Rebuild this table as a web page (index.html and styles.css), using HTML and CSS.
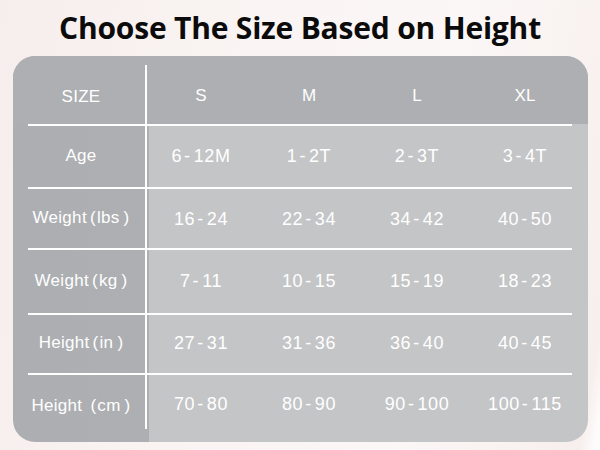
FILE: index.html
```html
<!DOCTYPE html>
<html>
<head>
<meta charset="utf-8">
<link rel="stylesheet" href="styles.css">
</head>
<body>
<div class="page">
  <h1 class="title">Choose The Size Based on Height</h1>
  <div class="chart">
    <div class="row head">
      <div class="label first">SIZE</div>
      <div class="cell">S</div>
      <div class="cell">M</div>
      <div class="cell">L</div>
      <div class="cell">XL</div>
    </div>
    <div class="row r1">
      <div class="label">Age</div>
      <div class="cell">6<span class="d">-</span>12M</div>
      <div class="cell">1<span class="d">-</span>2T</div>
      <div class="cell">2<span class="d">-</span>3T</div>
      <div class="cell">3<span class="d">-</span>4T</div>
    </div>
    <div class="row r2">
      <div class="label">Weight<span class="po">(</span>lbs<span class="pc">)</span></div>
      <div class="cell">16<span class="d">-</span>24</div>
      <div class="cell">22<span class="d">-</span>34</div>
      <div class="cell">34<span class="d">-</span>42</div>
      <div class="cell">40<span class="d">-</span>50</div>
    </div>
    <div class="row r3">
      <div class="label">Weight<span class="po">(</span>kg<span class="pc">)</span></div>
      <div class="cell">7<span class="d">-</span>11</div>
      <div class="cell">10<span class="d">-</span>15</div>
      <div class="cell">15<span class="d">-</span>19</div>
      <div class="cell">18<span class="d">-</span>23</div>
    </div>
    <div class="row r4">
      <div class="label">Height<span class="po">(</span>in<span class="pc">)</span></div>
      <div class="cell">27<span class="d">-</span>31</div>
      <div class="cell">31<span class="d">-</span>36</div>
      <div class="cell">36<span class="d">-</span>40</div>
      <div class="cell">40<span class="d">-</span>45</div>
    </div>
    <div class="row r5">
      <div class="label last">Height <span class="po">(</span>cm<span class="pc">)</span></div>
      <div class="cell">70<span class="d">-</span>80</div>
      <div class="cell">80<span class="d">-</span>90</div>
      <div class="cell">90<span class="d">-</span>100</div>
      <div class="cell">100<span class="d">-</span>115</div>
    </div>
  </div>
</div>
</body>
</html>
```
FILE: styles.css
```css
html, body {
  margin: 0;
  padding: 0;
}
body {
  width: 600px;
  height: 450px;
  overflow: hidden;
  background: linear-gradient(100deg, #f6eeec 0%, #faf5f4 45%, #fbf7f6 70%, #f7efed 97%, #fdfbfb 99%);
  font-family: "Liberation Sans", Arial, sans-serif;
}
.page {
  display: flex;
  flex-direction: column;
  align-items: flex-start;
}
.title {
  margin: 0;
  width: 600px;
  height: 56px;
  box-sizing: border-box;
  padding-top: 10px;
  text-align: center;
  font-family: "Open Sans", sans-serif;
  font-weight: 700;
  font-size: 30px;
  line-height: 35px;
  letter-spacing: -0.2px;
  color: #0b0b0b;
}
.chart {
  margin-left: 13px;
  width: 575px;
  border-radius: 22px;
  overflow: hidden;
  background: linear-gradient(to right, #acaeb1 0, #adafb2 136px, #c4c5c7 136px);
  display: flex;
  flex-direction: column;
}
.row {
  display: grid;
  grid-template-columns: 134px repeat(4, 108px) 1fr;
  background-image: linear-gradient(#fff, #fff);
  background-repeat: no-repeat;
  background-position: 15px 0;
  background-size: 544px 2px;
  color: #fff;
  font-size: 18px;
  letter-spacing: 0.6px;
}
.row.head {
  height: 68px;
  background: #adafb2;
  font-size: 17px;
  letter-spacing: 0;
}
.r1 { height: 63px; }
.r2 { height: 61px; }
.r3 { height: 65px; }
.r4 { height: 60px; }
.r5 { height: 69px; }
.label, .cell {
  display: flex;
  align-items: center;
  justify-content: center;
  white-space: pre;
}
.label {
  border-right: 2px solid #fff;
  padding-left: 4px;
  font-size: 17px;
  letter-spacing: 0.3px;
}
.label.first {
  margin-top: 9px;
  padding-top: 4px;
}
.label.last {
  margin-bottom: 13px;
  padding-top: 10px;
}
.cell {
  padding-top: 1px;
}
.head .cell {
  padding-top: 12px;
}
.r2 .cell { padding-top: 4px; }
.r5 .cell { padding-top: 0; padding-bottom: 6px; }
.d {
  margin: 0 3px 0 2px;
}
.po {
  margin: 0 1px 0 3px;
}
.pc {
  margin: 0 0 0 4px;
}
```
